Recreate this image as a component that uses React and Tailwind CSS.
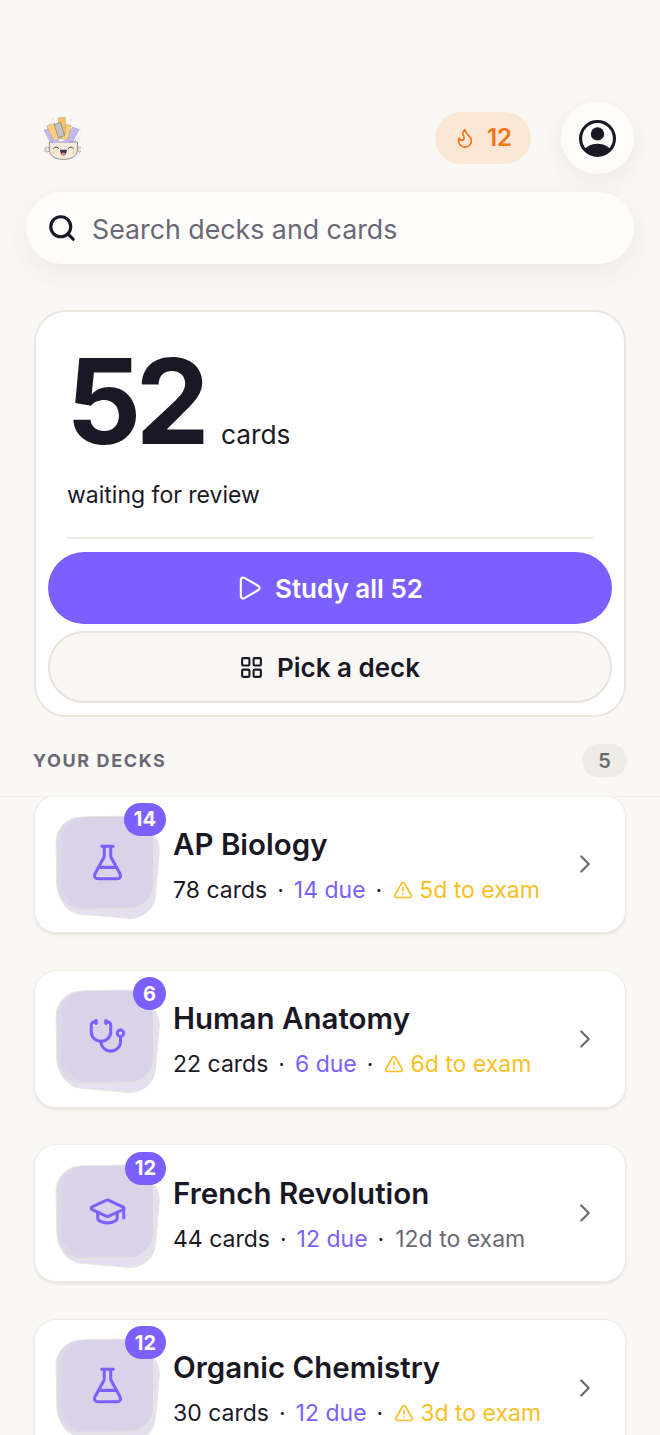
import React from "react";
import { ChevronRight, FlaskConical, Flame, GraduationCap, LayoutGrid, Play, Search, Stethoscope, TriangleAlert } from "lucide-react";

const decks = [
  { name: "AP Biology", cards: 78, due: 14, exam: "5d to exam", urgent: true, Icon: FlaskConical },
  { name: "Human Anatomy", cards: 22, due: 6, exam: "6d to exam", urgent: true, Icon: Stethoscope },
  { name: "French Revolution", cards: 44, due: 12, exam: "12d to exam", urgent: false, Icon: GraduationCap },
  { name: "Organic Chemistry", cards: 30, due: 12, exam: "3d to exam", urgent: true, Icon: FlaskConical },
];

const Logo = () => (
  <svg viewBox="40 30 116 138" className="h-[44px] w-[37px]">
    <circle cx="68" cy="40" r="3" fill="#fbe3b4" />
    <circle cx="125" cy="42" r="3" fill="#d9d2f5" />
    <circle cx="50" cy="100" r="3" fill="#fbe3b4" />
    <circle cx="150" cy="100" r="3" fill="#d9d2f5" />
    <circle cx="155" cy="75" r="3" fill="#fbe3b4" />
    <polygon points="40,75 62,68 85,108 62,114" fill="#c4b8ee" stroke="#8f84a8" strokeWidth="1.5" />
    <polygon points="150,72 130,65 105,108 128,114" fill="#c4b8ee" stroke="#8f84a8" strokeWidth="1.5" />
    <polygon points="48,62 72,52 95,100 72,108" fill="#fbcf7d" stroke="#a8957a" strokeWidth="1.5" />
    <polygon points="100,55 125,60 115,105 92,100" fill="#fbcf7d" stroke="#a8957a" strokeWidth="1.5" />
    <polygon points="85,35 107,35 107,85 85,85" fill="#fbc35f" stroke="#a8957a" strokeWidth="1.5" />
    <polygon points="72,57 92,50 105,92 85,98" fill="#c4c2c2" stroke="#77757c" strokeWidth="2" />
    <circle cx="50" cy="135" r="8" fill="#efe4d3" stroke="#8d8a8c" strokeWidth="2" />
    <circle cx="152" cy="135" r="8" fill="#efe4d3" stroke="#8d8a8c" strokeWidth="2" />
    <path d="M57 112 H145 V135 C145 155 128 166 101 166 C74 166 57 155 57 135 Z" fill="#f6ecdd" stroke="#77757c" strokeWidth="2.5" />
    <path d="M62 114 L78 102 L92 114 L108 102 L124 114 L140 104 L141 114 Z" fill="#c4b8ee" />
    <path d="M70 132 Q78 122 86 132 M116 132 Q124 122 132 132" fill="none" stroke="#3f3b44" strokeWidth="3" strokeLinecap="round" />
    <path d="M90 136 H112 Q110 154 101 154 Q92 154 90 136 Z" fill="#3f3b44" />
    <path d="M95 147 Q101 142 107 147 Q104 154 101 154 Q98 154 95 147 Z" fill="#f08a7c" />
    <circle cx="70" cy="144" r="6" fill="#fbd9a8" />
    <circle cx="132" cy="144" r="6" fill="#fbd9a8" />
  </svg>
);

const DeckIcon = ({ Icon, due }) => (
  <div className="relative h-[104px] w-[106px] shrink-0">
    <div className="absolute left-[4px] top-[7px] h-[94px] w-[98px] rotate-[5deg] rounded-[26px] border border-[#e8e4dc] bg-[#e4e0f1]" />
    <div className="absolute left-0 top-0 h-[94px] w-[98px] rotate-[-1deg] rounded-[26px] border border-[#e8e4dc] bg-[#dcd8ea]" />
    <div className="absolute left-[6px] top-[1px] flex h-[90px] w-[91px] items-center justify-center rounded-[24px] bg-[#d8d3e8]">
      <Icon size={39} strokeWidth={1.85} className="mt-[1px] text-[#7b5fff]" />
    </div>
    <div className="absolute right-[-4px] top-[-13px] flex h-[33px] min-w-[33px] items-center justify-center rounded-full bg-[#7b5fff] px-[10px] text-[20px] font-bold text-white">
      {due}
    </div>
  </div>
);

const DeckCard = ({ deck }) => (
  <div className="flex h-[138px] items-center rounded-[22px] border border-[#efece5] bg-white pl-[21px] pr-[25px] shadow-[0_2px_3px_rgba(60,50,30,0.1)]">
    <div className="pt-[7px]">
      <DeckIcon Icon={deck.Icon} due={deck.due} />
    </div>
    <div className="ml-[11px] min-w-0 flex-1 pt-[1px]">
      <div className="text-[29.5px] font-semibold leading-[36px] text-[#1a1825]">{deck.name}</div>
      <div className="mt-[14px] flex items-center text-[23px] leading-[28px] text-[#1a1825]">
        <span>{deck.cards} cards</span>
        <span className="mx-[10px]">·</span>
        <span className="text-[#7b5fff]">{deck.due} due</span>
        <span className="mx-[10px]">·</span>
        {deck.urgent ? (
          <span className="flex items-center gap-[6px] pl-[1px] text-[#fbbf24]">
            <TriangleAlert size={20} strokeWidth={2} />
            {deck.exam}
          </span>
        ) : (
          <span className="ml-[1px] text-[#6b6875]">{deck.exam}</span>
        )}
      </div>
    </div>
    <ChevronRight size={30} strokeWidth={1.75} className="text-[#6b6875]" />
  </div>
);

export default function App() {
  return (
    <div className="flex h-[1435px] flex-col overflow-hidden bg-[#faf8f5] font-['Inter',sans-serif]">
      <header className="flex items-center pl-[44px] pr-[26px] pt-[102px]">
        <Logo />
        <div className="ml-auto flex h-[52px] w-[96px] items-center justify-center gap-[11px] rounded-[26px] bg-[#fbe8d4] text-[24px] font-semibold text-[#f97316]">
          <Flame size={22} strokeWidth={1.75} />
          12
        </div>
        <div className="ml-[30px] flex h-[72px] w-[73px] items-center justify-center rounded-full bg-[#fdfcfa] shadow-[0_8px_24px_rgba(60,50,30,0.07)]">
          <svg viewBox="0 0 36 36" className="h-[37px] w-[37px]">
            <defs>
              <clipPath id="ring">
                <circle cx="18" cy="18" r="17" />
              </clipPath>
            </defs>
            <circle cx="18" cy="18" r="16.5" fill="none" stroke="#1a1825" strokeWidth="3" />
            <circle cx="18" cy="13.5" r="6.5" fill="#1a1825" />
            <ellipse cx="18" cy="33" rx="14" ry="10" fill="#1a1825" clipPath="url(#ring)" />
          </svg>
        </div>
      </header>

      <div className="mx-[26px] mt-[18px] flex h-[72px] items-center rounded-[36px] bg-[#fdfcfa] pl-[21px] text-[26.75px] text-[#6b6875] shadow-[0_10px_30px_rgba(60,50,30,0.07)]">
        <Search size={30} strokeWidth={2.5} className="mr-[15px] text-[#1a1825]" />
        <span className="pt-[2px]">Search decks and cards</span>
      </div>

      <section className="mx-[34px] mt-[46px] h-[407px] rounded-[32px] border-2 border-[#ebe7df] bg-white px-[12px] pt-[29px]">
        <div className="flex items-baseline pl-[18px]">
          <span className="text-[118px] font-bold leading-[120px] tracking-[-0.05em] text-[#1a1825]">52</span>
          <span className="ml-[17px] text-[26.3px] text-[#1a1825]">cards</span>
        </div>
        <p className="mt-[19px] pl-[19px] text-[23px] leading-[30px] text-[#1a1825]">waiting for review</p>
        <div className="mx-[19px] mt-[27px] h-[2px] bg-[#ece8e1]" />
        <button className="mt-[13px] flex h-[72px] w-full items-center justify-center gap-[12px] rounded-[36px] bg-[#7b5fff] pr-[2px] text-[26px] font-semibold text-white">
          <Play size={28} strokeWidth={1.85} />
          Study all 52
        </button>
        <button className="mt-[7px] flex h-[72px] w-full items-center justify-center gap-[13px] rounded-[36px] border-2 border-[#e8e4dc] bg-[#faf8f5] pr-[1px] text-[26px] font-semibold text-[#1a1825]">
          <LayoutGrid size={25} strokeWidth={2} />
          Pick a deck
        </button>
      </section>

      <div className="ml-[33px] mr-[33px] mt-[27px] flex h-[33px] items-center justify-between">
        <span className="text-[18px] font-bold tracking-[0.09em] text-[#6b6875]">YOUR DECKS</span>
        <span className="flex h-[33px] w-[45px] items-center justify-center rounded-full bg-[#efece6] text-[20px] font-semibold text-[#6b6875]">5</span>
      </div>

      <div className="mt-[19px] min-h-0 flex-1 overflow-hidden border-t border-[#f2efe9]">
        <div className="-mt-[2px] flex flex-col gap-[36.5px] px-[34px]">
          {decks.map((deck) => (
            <DeckCard key={deck.name} deck={deck} />
          ))}
        </div>
      </div>
    </div>
  );
}
